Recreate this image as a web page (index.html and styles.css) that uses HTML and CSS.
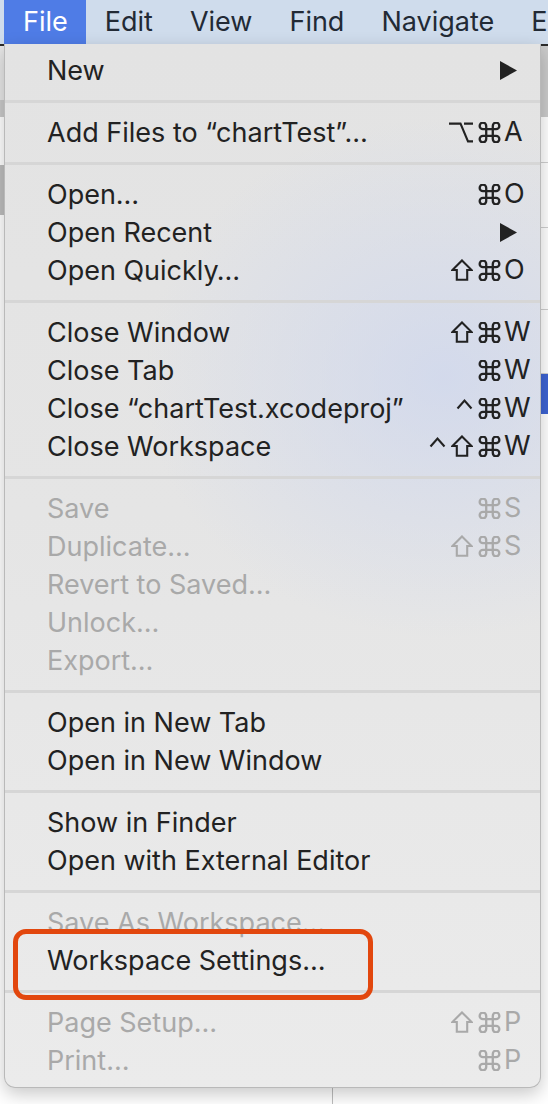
FILE: index.html
```html
<!DOCTYPE html>
<html>
<head>
<meta charset="utf-8">
<link rel="stylesheet" href="styles.css">
</head>
<body>
<svg class="defs" width="0" height="0">
  <defs>
    <symbol id="cmd" viewBox="2.4 2.4 19.2 19.2"><path d="M15 6v12a3 3 0 1 0 3-3H6a3 3 0 1 0 3 3V6a3 3 0 1 0-3 3h12a3 3 0 1 0-3-3"/></symbol>
    <symbol id="shift" viewBox="0 0 22 22"><path d="M11 1.4 L20.6 11 H16.2 V20.8 H5.8 V11 H1.4 Z"/></symbol>
    <symbol id="opt" viewBox="0 0 24 21"><path d="M0 1.6 H11.5 L19 19.4 H24 M15 1.6 H24"/></symbol>
    <symbol id="ctrl" viewBox="0 0 17 21"><path d="M1.5 10.5 L8.5 2.5 L15.5 10.5"/></symbol>
  </defs>
</svg>
<div class="screen">
  <div class="menubar">
    <span class="mb-item active">File</span>
    <span class="mb-item">Edit</span>
    <span class="mb-item">View</span>
    <span class="mb-item">Find</span>
    <span class="mb-item">Navigate</span>
    <span class="mb-item">E</span>
  </div>

  <div class="window">
    <div class="left-pane">
      <div class="lp-top"></div>
      <div class="lp-tab"></div>
      <div class="lp-row"></div>
      <div class="lp-sel"></div>
    </div>
    <div class="right-pane">
      <div class="rp-top"></div>
      <div class="rp-row r1"></div>
      <div class="rp-row r2"></div>
      <div class="rp-row r3"></div>
      <div class="rp-row r4"></div>
      <div class="rp-sel"></div>
      <div class="rp-row r5"></div>
      <div class="rp-row r6"></div>
    </div>
  </div>

  <div class="menu">
    <div class="item"><span class="label">New</span><span class="sub"><svg width="17" height="19" viewBox="0 0 17 19"><polygon points="0,0 17,9.5 0,19"/></svg></span></div>
    <div class="sep"></div>
    <div class="item"><span class="label">Add Files to “chartTest”…</span><span class="sc"><span class="mods"><svg class="k opt"><use href="#opt"/></svg><svg class="k cmd"><use href="#cmd"/></svg></span><span class="key">A</span></span></div>
    <div class="sep"></div>
    <div class="item"><span class="label">Open…</span><span class="sc"><span class="mods"><svg class="k cmd"><use href="#cmd"/></svg></span><span class="key">O</span></span></div>
    <div class="item"><span class="label">Open Recent</span><span class="sub"><svg width="17" height="19" viewBox="0 0 17 19"><polygon points="0,0 17,9.5 0,19"/></svg></span></div>
    <div class="item"><span class="label">Open Quickly…</span><span class="sc"><span class="mods"><svg class="k shift"><use href="#shift"/></svg><svg class="k cmd"><use href="#cmd"/></svg></span><span class="key">O</span></span></div>
    <div class="sep"></div>
    <div class="item"><span class="label">Close Window</span><span class="sc"><span class="mods"><svg class="k shift"><use href="#shift"/></svg><svg class="k cmd"><use href="#cmd"/></svg></span><span class="key">W</span></span></div>
    <div class="item"><span class="label">Close Tab</span><span class="sc"><span class="mods"><svg class="k cmd"><use href="#cmd"/></svg></span><span class="key">W</span></span></div>
    <div class="item"><span class="label">Close “chartTest.xcodeproj”</span><span class="sc"><span class="mods"><svg class="k ctrl"><use href="#ctrl"/></svg><svg class="k cmd"><use href="#cmd"/></svg></span><span class="key">W</span></span></div>
    <div class="item"><span class="label">Close Workspace</span><span class="sc"><span class="mods"><svg class="k ctrl"><use href="#ctrl"/></svg><svg class="k shift"><use href="#shift"/></svg><svg class="k cmd"><use href="#cmd"/></svg></span><span class="key">W</span></span></div>
    <div class="sep"></div>
    <div class="item disabled"><span class="label">Save</span><span class="sc"><span class="mods"><svg class="k cmd"><use href="#cmd"/></svg></span><span class="key">S</span></span></div>
    <div class="item disabled"><span class="label">Duplicate…</span><span class="sc"><span class="mods"><svg class="k shift"><use href="#shift"/></svg><svg class="k cmd"><use href="#cmd"/></svg></span><span class="key">S</span></span></div>
    <div class="item disabled"><span class="label">Revert to Saved…</span></div>
    <div class="item disabled"><span class="label">Unlock…</span></div>
    <div class="item disabled"><span class="label">Export…</span></div>
    <div class="sep"></div>
    <div class="item"><span class="label">Open in New Tab</span></div>
    <div class="item"><span class="label">Open in New Window</span></div>
    <div class="sep"></div>
    <div class="item"><span class="label">Show in Finder</span></div>
    <div class="item"><span class="label">Open with External Editor</span></div>
    <div class="sep"></div>
    <div class="item disabled"><span class="label">Save As Workspace…</span></div>
    <div class="item highlight"><span class="label">Workspace Settings…</span><span class="callout"></span></div>
    <div class="sep"></div>
    <div class="item disabled"><span class="label">Page Setup…</span><span class="sc"><span class="mods"><svg class="k shift"><use href="#shift"/></svg><svg class="k cmd"><use href="#cmd"/></svg></span><span class="key">P</span></span></div>
    <div class="item disabled"><span class="label">Print…</span><span class="sc"><span class="mods"><svg class="k cmd"><use href="#cmd"/></svg></span><span class="key">P</span></span></div>
  </div>
</div>
</body>
</html>
```

FILE: styles.css
```css
* { box-sizing: border-box; }
html, body {
  margin: 0;
  padding: 0;
  width: 548px;
  height: 1104px;
  overflow: hidden;
  background: #ffffff;
  font-family: Inter, "Noto Sans", "Liberation Sans", sans-serif;
}
.defs { position: absolute; width: 0; height: 0; }

.screen {
  position: relative;
  width: 548px;
  height: 1104px;
  overflow: hidden;
}

/* ---------- menu bar ---------- */
.menubar {
  display: flex;
  height: 44px;
  padding-left: 4px;
  background: #cfdcec;
  white-space: nowrap;
}
.mb-item {
  padding: 0 18px 0 19px;
  font-size: 27px;
  line-height: 44px;
  color: #222a35;
}
.mb-item.active {
  background: #4f7ce6;
  color: #ffffff;
}

/* ---------- background window ---------- */
.window {
  display: grid;
  grid-template-columns: 333px 1fr;
  border-top: 2px solid #2b2b2b;
  height: 1060px;
}
.left-pane { border-right: 1px solid #bdbdbd; overflow: hidden; }
.lp-top { height: 54px; background: #e6e6e6; }
.lp-tab { height: 17px; background: #c9c9c9; }
.lp-row { height: 48px; background: #fff; }
.lp-sel { height: 50px; background: #bdbdbd; }

.right-pane { overflow: hidden; }
.rp-top { height: 71px; background: #cbcbcb; }
.rp-row { border-bottom: 1px solid #cfcfcf; background: #fff; }
.r1 { height: 46px; }
.r2 { height: 65px; }
.r3 { height: 82px; }
.r4 { height: 64px; }
.r5 { height: 46px; border-bottom: none; }
.r6 { height: 46px; border-bottom: none; }
.rp-sel { height: 40px; background: #3d63d2; }

/* ---------- dropdown menu ---------- */
.menu {
  position: absolute;
  top: 44px;
  left: 4px;
  width: 537px;
  padding: 7px 0 8px;
  border: 1px solid #b9b9b9;
  border-top: none;
  border-radius: 0 0 11px 11px;
  background:
    radial-gradient(ellipse 300px 260px at 82% 32%, rgba(205, 214, 238, 0.75), rgba(205, 214, 238, 0) 100%),
    linear-gradient(to bottom, #e3e3e3 0%, #e5e5e5 45%, #ebebeb 100%);
  box-shadow: 0 6px 18px rgba(0, 0, 0, 0.22);
}
.item {
  position: relative;
  display: flex;
  align-items: center;
  height: 38px;
  padding: 0 11px 0 42px;
  font-size: 27px;
  color: #222222;
  white-space: nowrap;
}
.item.disabled { color: #a9a9a9; }
.label { flex: 1; }
.sep {
  height: 24px;
  display: flex;
  align-items: center;
}
.sep::before {
  content: "";
  display: block;
  width: 100%;
  height: 3px;
  background: #d6d6d6;
}

.sub { display: flex; margin-right: 12px; }
.sub svg { fill: currentColor; display: block; }

.sc {
  display: flex;
  align-items: center;
}
.mods {
  display: flex;
  align-items: center;
  gap: 5px;
  margin-right: 3px;
}
.key {
  width: 25px;
  line-height: 38px;
}
.k {
  display: block;
  fill: none;
  stroke: currentColor;
  stroke-width: 2.1;
  stroke-linejoin: miter;
  overflow: visible;
}
.k.cmd { width: 23px; height: 21px; }
.k.shift { width: 22px; height: 22px; }
.k.opt { width: 24px; height: 21px; }
.k.ctrl { width: 17px; height: 21px; }

.callout {
  position: absolute;
  left: 8px;
  top: -12px;
  width: 360px;
  height: 71px;
  border: 5px solid #e2470e;
  border-radius: 13px;
}
```
